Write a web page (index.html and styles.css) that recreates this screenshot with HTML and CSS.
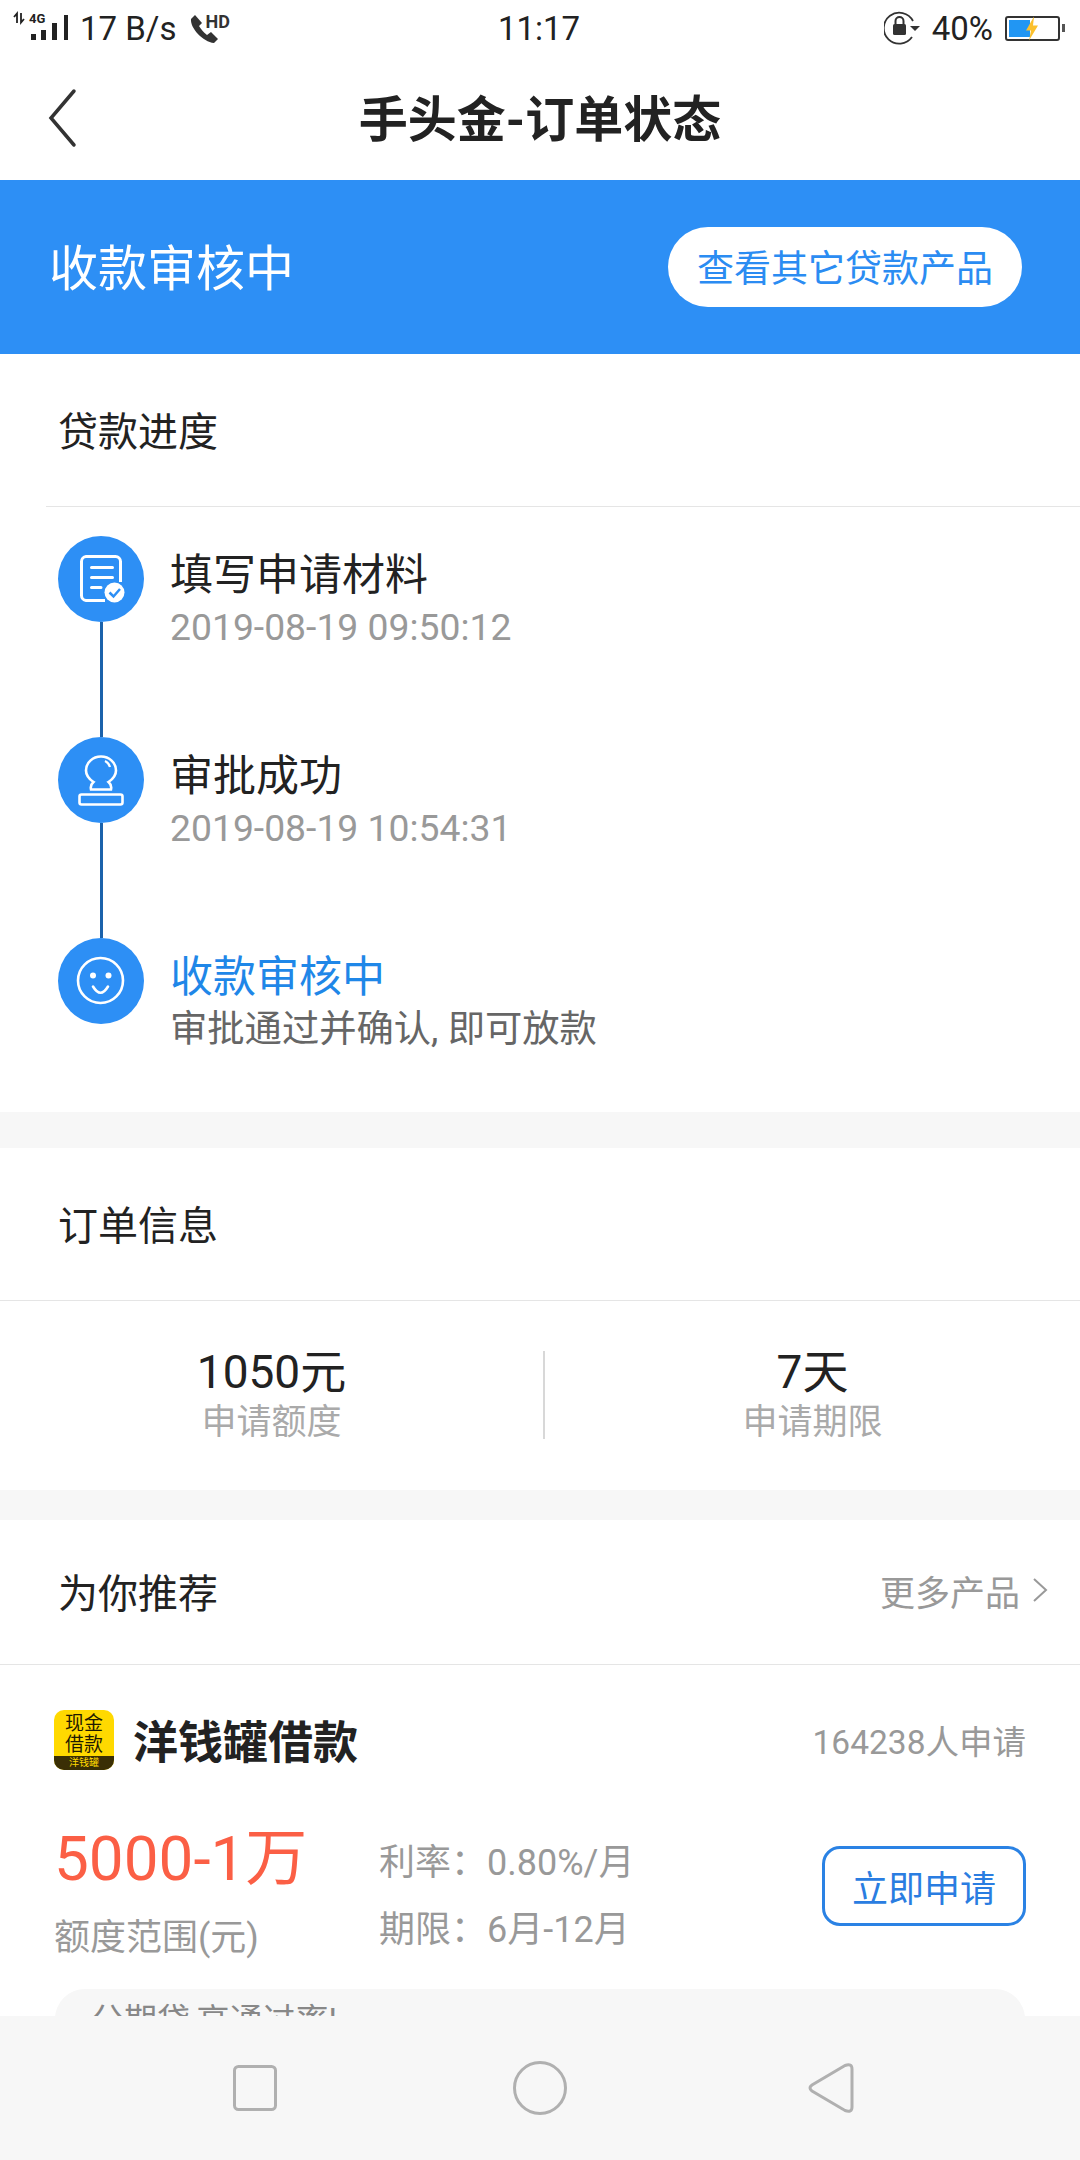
FILE: index.html
```html
<!DOCTYPE html>
<html lang="zh-CN">
<head>
  <meta charset="UTF-8" />
  <meta name="viewport" content="width=device-width, initial-scale=1.0" />
  <title>手头金-订单状态</title>
  <link rel="stylesheet" href="styles.css">
</head>
<body>
  <div class="phone">
    <header class="status-bar">
      <div class="status-left">
        <svg class="signal" width="56" height="36" viewBox="0 0 56 36">
          <path d="M1 7 4 3.500V13M8 3V12.500L11 9" fill="none" stroke="#222" stroke-width="1.800"/>
          <text x="16" y="13" font-family="Roboto" font-size="13" font-weight="700" fill="#222">4G</text>
          <rect x="18" y="24" width="5" height="6" fill="#222"/>
          <rect x="28" y="20" width="5" height="10" fill="#222"/>
          <rect x="39" y="13" width="5" height="17" fill="#222"/>
          <rect x="51" y="5" width="4" height="25" fill="#222"/>
        </svg>
        <span class="speed">17 B/s</span>
        <span class="call">
          <svg width="30" height="30" viewBox="0 0 30 30">
            <path d="M5 1 1 5C0 14 13 28 24 29L28 25 21 18 17 21C13 18 11 15 9 12L12 9Z" fill="#333"/>
          </svg>
          <span class="call-hd">HD</span>
        </span>
      </div>
      <div class="status-time">11:17</div>
      <div class="status-right">
        <svg width="36" height="34" viewBox="0 0 36 34">
          <path d="M28 26A15.500 15.500 0 1 1 29 10" fill="none" stroke="#333" stroke-width="1.800"/>
          <path d="M26 15H36L31 20Z" fill="#333"/>
          <rect x="9" y="13" width="13" height="11" rx="1.500" fill="#333"/>
          <path d="M11.500 13V10A4 4 0 0 1 19.500 10V13" fill="none" stroke="#333" stroke-width="2"/>
        </svg>
        <span class="battery-text">40%</span>
        <div class="battery">
          <div class="battery-fill"></div>
          <svg class="battery-bolt" width="14" height="25" viewBox="0 0 14 24">
            <path d="M9 0 1 14H6L4 24 13 9H8Z" fill="#fbc02d"/>
          </svg>
        </div>
        <div class="battery-nub"></div>
      </div>
    </header>

    <div class="title-bar">
      <svg class="back" width="30" height="60" viewBox="0 0 30 60">
        <path d="M26 3 3 30 26 57" fill="none" stroke="#333" stroke-width="3.500" stroke-linecap="round"/>
      </svg>
      <h1>手头金-订单状态</h1>
    </div>

    <main class="content">
      <div class="banner">
        <span class="banner-title">收款审核中</span>
        <button class="banner-btn">查看其它贷款产品</button>
      </div>

      <section class="block progress">
        <div class="progress-head">贷款进度</div>
        <div class="steps">
          <div class="step">
            <div class="step-rail">
              <svg class="step-icon" width="86" height="86" viewBox="0 0 86 86">
                <circle cx="43" cy="43" r="43" fill="#2d8ff5"/>
                <path d="M47 64.500H28A5 5 0 0 1 23.500 59.500V25.500A5 5 0 0 1 28 20.500H57.500A5 5 0 0 1 62.500 25.500V46" fill="none" stroke="#fff" stroke-width="3"/>
                <path d="M33.500 31.500H54.500M33.500 41.500H54.500M33.500 51.500H43" fill="none" stroke="#fff" stroke-width="3" stroke-linecap="round"/>
                <circle cx="56.500" cy="56.500" r="10" fill="#fff"/>
                <path d="M51.500 56.500 55.500 60.500 62 53" fill="none" stroke="#2d8ff5" stroke-width="2.500"/>
              </svg>
              <div class="step-line"></div>
            </div>
            <div class="step-text">
              <div class="step-title">填写申请材料</div>
              <div class="step-time">2019-08-19 09:50:12</div>
            </div>
          </div>
          <div class="step">
            <div class="step-rail">
              <svg class="step-icon" width="86" height="86" viewBox="0 0 86 86">
                <circle cx="43" cy="43" r="43" fill="#2d8ff5"/>
                <path d="M33 52.500Q32 48 35.500 45Q28 40 28 33.500A15 14 0 0 1 58 33.500Q58 40 50.500 45Q54 48 53 52.500Z" fill="none" stroke="#fff" stroke-width="2.600"/>
                <path d="M47 24Q51 26 52 30" fill="none" stroke="#fff" stroke-width="2.200"/>
                <rect x="21.500" y="57.500" width="43" height="10" rx="2" fill="none" stroke="#fff" stroke-width="2.600"/>
              </svg>
              <div class="step-line"></div>
            </div>
            <div class="step-text">
              <div class="step-title">审批成功</div>
              <div class="step-time">2019-08-19 10:54:31</div>
            </div>
          </div>
          <div class="step">
            <div class="step-rail">
              <svg class="step-icon" width="86" height="86" viewBox="0 0 86 86">
                <circle cx="43" cy="43" r="43" fill="#2d8ff5"/>
                <circle cx="42.500" cy="42.500" r="22.500" fill="none" stroke="#fff" stroke-width="2.600"/>
                <circle cx="35" cy="37.500" r="3" fill="#fff"/>
                <circle cx="50.500" cy="37.500" r="3" fill="#fff"/>
                <path d="M35 48.500Q42.500 61 50 48.500" fill="none" stroke="#fff" stroke-width="2.600" stroke-linecap="round"/>
              </svg>
            </div>
            <div class="step-text">
              <div class="step-title step-title-active">收款审核中</div>
              <div class="step-note">审批通过并确认, 即可放款</div>
            </div>
          </div>
        </div>
      </section>

      <section class="block">
        <div class="block-head">订单信息</div>
        <div class="stats">
          <div class="stat stat-left">
            <div class="stat-value">1050元</div>
            <div class="stat-label">申请额度</div>
          </div>
          <div class="stat-divider"></div>
          <div class="stat">
            <div class="stat-value">7天</div>
            <div class="stat-label">申请期限</div>
          </div>
        </div>
      </section>

      <section class="block recommend">
        <div class="recommend-head">
          <span>为你推荐</span>
          <span class="more">
            更多产品
            <svg width="16" height="26" viewBox="0 0 16 26">
              <path d="M2 2 14 13 2 24" fill="none" stroke="#999" stroke-width="2"/>
            </svg>
          </span>
        </div>
        <div class="product">
          <div class="product-top">
            <div class="logo">
              <div class="logo-main">现金<br>借款</div>
              <div class="logo-foot">洋钱罐</div>
            </div>
            <div class="product-name">洋钱罐借款</div>
            <div class="product-count">164238人申请</div>
          </div>
          <div class="product-info">
            <div class="amount">
              <div class="amount-value">5000-1万</div>
              <div class="amount-label">额度范围(元)</div>
            </div>
            <div class="terms">
              <div>利率&#65306;0.80%/月</div>
              <div>期限&#65306;6月-12月</div>
            </div>
            <button class="apply-btn">立即申请</button>
          </div>
          <div class="tip">分期贷,高通过率!</div>
        </div>
      </section>
    </main>

    <nav class="nav-bar">
      <svg width="44" height="46" viewBox="0 0 44 46">
        <rect x="1.500" y="1.500" width="41" height="43" rx="4" fill="none" stroke="#b0b0b0" stroke-width="3"/>
      </svg>
      <svg class="nav-home" width="54" height="54" viewBox="0 0 54 54">
        <circle cx="27" cy="27" r="25.500" fill="none" stroke="#b0b0b0" stroke-width="3"/>
      </svg>
      <svg width="46" height="52" viewBox="0 0 46 52">
        <path d="M37 3.500 4 23Q0 26 4 29L37 48.500Q44 51 44 45V7Q44 1 37 3.500Z" fill="none" stroke="#b0b0b0" stroke-width="3"/>
      </svg>
    </nav>
  </div>
</body>
</html>
```

FILE: styles.css
```css
* {
  box-sizing: border-box;
}
body {
  margin: 0;
  font-family: Roboto, "Noto Sans CJK SC", sans-serif;
  background-color: #fff;
  color: #222;
}
.phone {
  width: 1080px;
  height: 2160px;
  display: flex;
  flex-direction: column;
  overflow: hidden;
}

/* status bar */
.status-bar {
  height: 60px;
  padding: 0 15px 4px 13px;
  display: grid;
  grid-template-columns: 1fr auto 1fr;
  align-items: center;
  font-size: 33px;
  color: #222;
}
.status-left {
  display: flex;
  align-items: center;
}
.signal {
  margin-right: 11px;
}
.call {
  position: relative;
  margin-left: 13px;
  width: 40px;
  height: 30px;
  display: block;
}
.call-hd {
  position: absolute;
  left: 16px;
  top: -2px;
  font-size: 18px;
  font-weight: 700;
  line-height: 22px;
  color: #333;
}
.status-right {
  display: flex;
  align-items: center;
  justify-content: flex-end;
}
.battery-text {
  margin: 0 12px 0 12px;
}
.battery {
  position: relative;
  width: 55px;
  height: 25px;
  padding: 2px;
  border: 2px solid #333;
  border-radius: 3px;
}
.battery-fill {
  width: 21px;
  height: 100%;
  background-color: #2196f3;
}
.battery-bolt {
  position: absolute;
  left: 18px;
  top: -2px;
}
.battery-nub {
  width: 3px;
  height: 8px;
  margin-left: 2px;
  background-color: #555;
}

/* title */
.title-bar {
  height: 120px;
  padding-bottom: 10px;
  position: relative;
  display: flex;
  align-items: center;
  justify-content: center;
}
.title-bar h1 {
  margin: 0;
  font-size: 49px;
  font-weight: 700;
  color: #222;
}
.back {
  position: absolute;
  left: 48px;
  top: 28px;
}

.content {
  flex: 1;
  min-height: 0;
  overflow: hidden;
  background-color: #f7f7f7;
}

.banner {
  height: 174px;
  padding: 0 58px 0 49px;
  display: flex;
  align-items: center;
  justify-content: space-between;
  background-color: #2d8ff5;
}
.banner-title {
  margin-bottom: 6px;
  font-size: 49px;
  color: #fff;
}
.banner-btn {
  width: 354px;
  height: 80px;
  padding: 0 0 2px;
  border: none;
  border-radius: 40px;
  background-color: #fff;
  color: #2b8cf2;
  font-family: inherit;
  font-size: 37px;
}

.block {
  margin-bottom: 30px;
  background-color: #fff;
}
.progress {
  margin-bottom: 36px;
}
.progress-head {
  height: 153px;
  margin-left: 46px;
  padding-left: 12px;
  padding-bottom: 2px;
  display: flex;
  align-items: center;
  font-size: 40px;
  border-bottom: 1px solid #e5e5e5;
}
.steps {
  padding: 29px 0 0 58px;
}
.step {
  height: 201px;
  display: flex;
}
.step:last-child {
  height: 174px;
}
.step-rail {
  width: 86px;
  display: flex;
  flex-direction: column;
  align-items: center;
}
.step-icon {
  flex: none;
}
.step-line {
  flex: 1;
  width: 3px;
  background-color: #1b62ab;
}
.step-text {
  margin-left: 26px;
  padding-top: 9px;
}
.step-title {
  font-size: 43px;
  line-height: 60px;
  color: #222;
}
.step-title-active {
  color: #1f87e8;
}
.step-time {
  font-size: 37.300px;
  line-height: 44px;
  color: #999;
}
.step-note {
  font-size: 37.300px;
  line-height: 44px;
  color: #666;
}

.block-head {
  height: 153px;
  padding-left: 58px;
  padding-bottom: 2px;
  display: flex;
  align-items: center;
  font-size: 40px;
  border-bottom: 1px solid #e5e5e5;
}
.stats {
  height: 189px;
  padding-bottom: 2px;
  display: flex;
  align-items: center;
}
.stat {
  flex: 1;
  text-align: center;
}
.stat-left {
  flex: none;
  width: 543px;
}
.stat-value {
  margin-bottom: 2px;
  font-size: 46px;
  line-height: 54px;
  color: #222;
}
.stat-label {
  font-size: 35px;
  line-height: 44px;
  color: #aaa;
}
.stat-divider {
  width: 2px;
  height: 88px;
  background-color: #d8d8d8;
}

.recommend {
  margin-bottom: 0;
}
.recommend-head {
  height: 145px;
  padding: 0 32px 2px 58px;
  display: flex;
  align-items: center;
  justify-content: space-between;
  font-size: 40px;
  border-bottom: 1px solid #e5e5e5;
}
.more {
  margin-bottom: 2px;
  display: flex;
  align-items: center;
  gap: 12px;
  font-size: 35px;
  color: #999;
}
.product {
  padding: 42px 54px 0 54px;
}
.product-top {
  display: flex;
  align-items: center;
}
.logo {
  width: 60px;
  height: 60px;
  border-radius: 10px;
  overflow: hidden;
  display: flex;
  flex-direction: column;
  background-color: #ffd900;
  text-align: center;
}
.logo-main {
  flex: 1;
  padding-top: 3px;
  font-size: 19px;
  line-height: 21px;
  color: #1f1a00;
}
.logo-foot {
  height: 14px;
  font-size: 10px;
  line-height: 14px;
  background-color: #3a2f05;
  color: #ffd900;
}
.product-name {
  flex: 1;
  margin-left: 19px;
  font-size: 45px;
  font-weight: 700;
}
.product-count {
  font-size: 33.500px;
  color: #999;
}
.product-info {
  margin-top: 49px;
  display: flex;
  align-items: flex-start;
}
.amount {
  width: 325px;
}
.amount-value {
  font-size: 62px;
  line-height: 76px;
  color: #fb5f45;
}
.amount-label {
  margin-top: 18px;
  font-size: 36px;
  line-height: 46px;
  color: #999;
}
.terms {
  flex: 1;
  padding-top: 9px;
  font-size: 36px;
  line-height: 67px;
  color: #999;
}
.apply-btn {
  width: 204px;
  height: 80px;
  margin-top: 25px;
  padding: 0;
  border: 3px solid #2a82e4;
  border-radius: 18px;
  background-color: #fff;
  color: #2a7de1;
  font-family: inherit;
  font-size: 36px;
}
.tip {
  margin: 25px 1px 0;
  height: 120px;
  padding: 10px 36px;
  border-radius: 30px;
  background-color: #f7f7f7;
  font-size: 33px;
  line-height: 44px;
  color: #888;
}

.nav-bar {
  height: 144px;
  padding: 0 0 0 233px;
  display: flex;
  align-items: center;
  background-color: #f7f7f7;
}
.nav-home {
  margin: 0 241px 0 236px;
}
```
